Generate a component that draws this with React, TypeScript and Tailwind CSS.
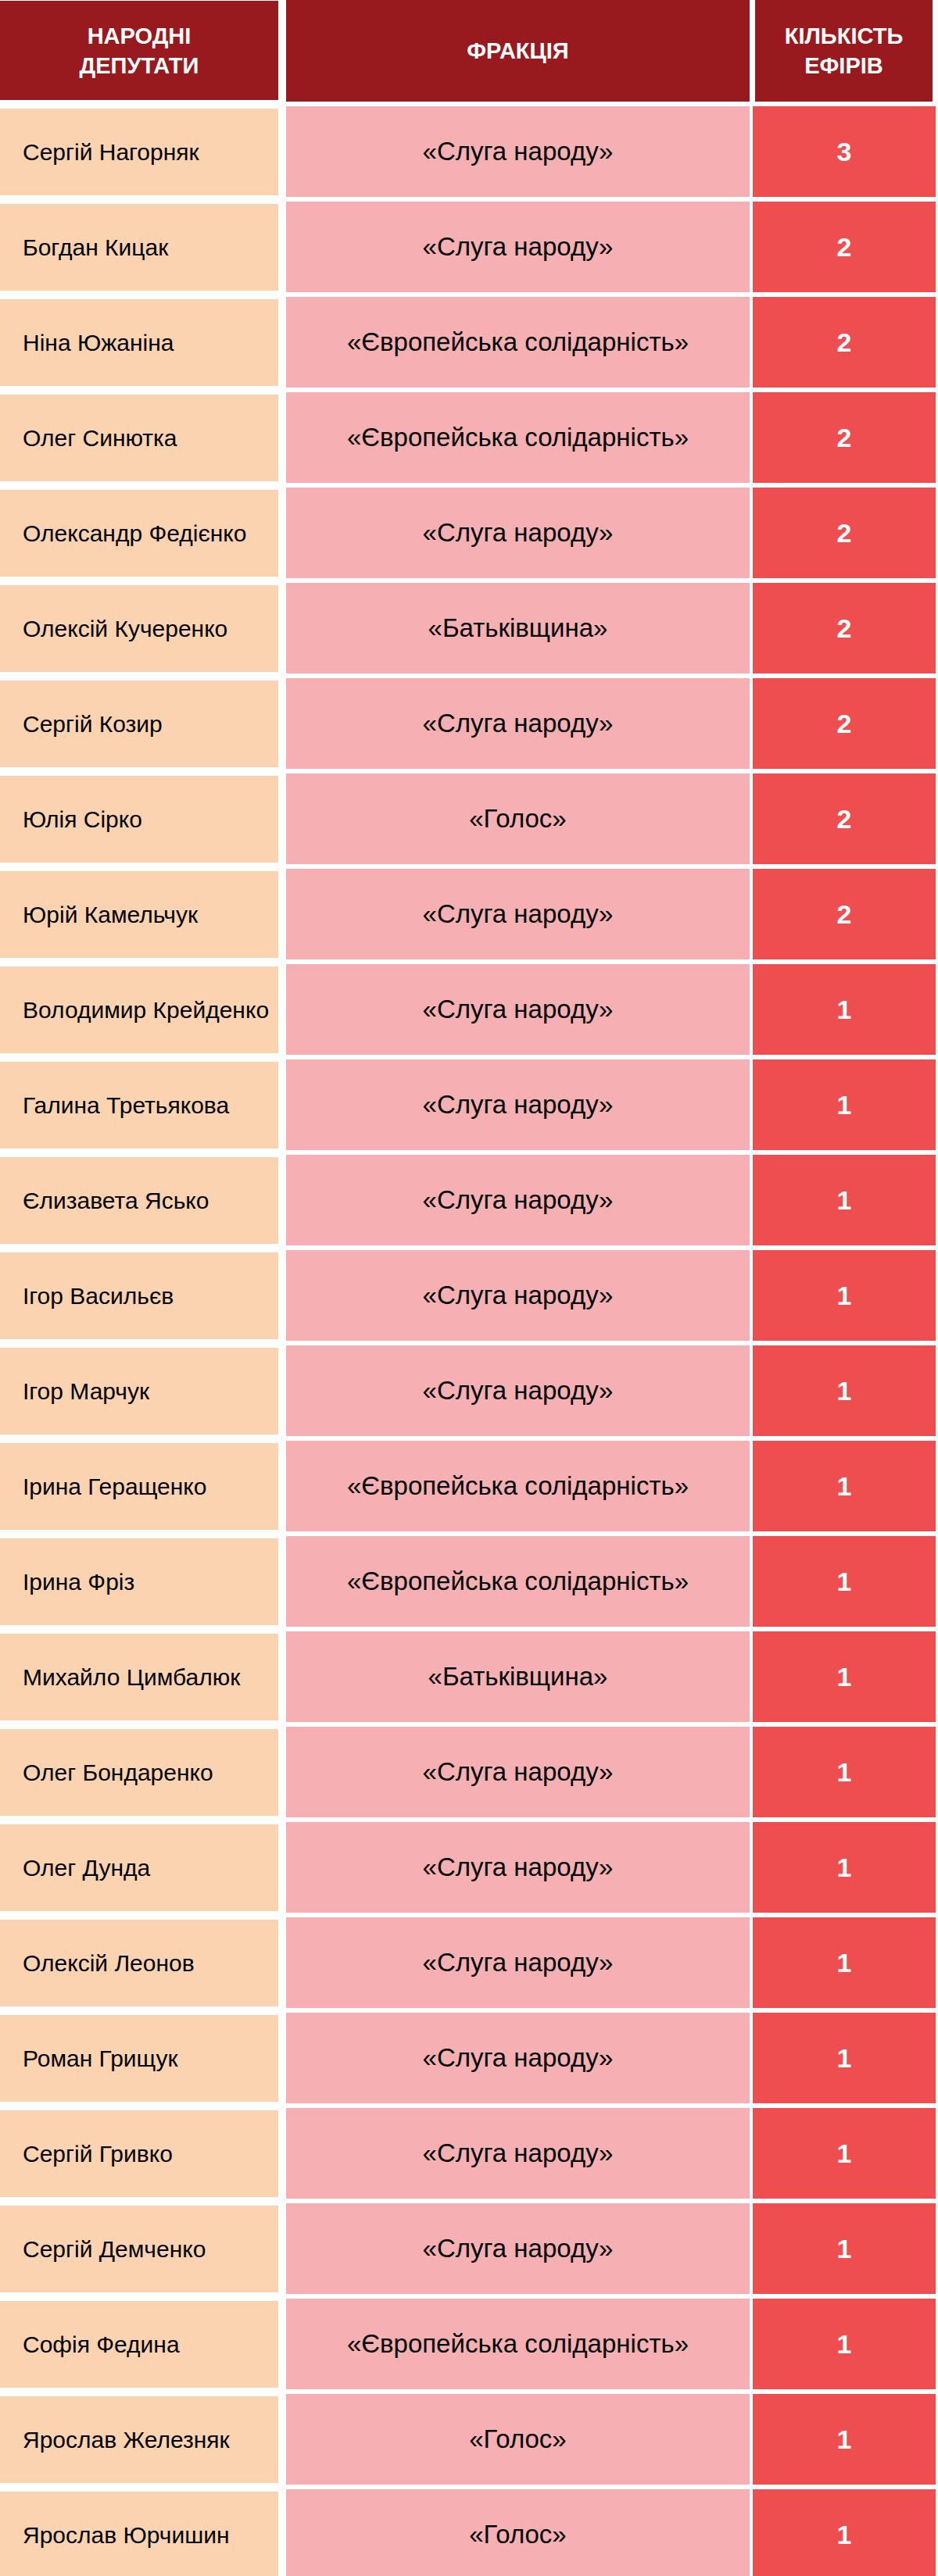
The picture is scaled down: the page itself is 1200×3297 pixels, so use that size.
const rows: [string, string, number][] = [
  ["Сергій Нагорняк", "«Слуга народу»", 3],
  ["Богдан Кицак", "«Слуга народу»", 2],
  ["Ніна Южаніна", "«Європейська солідарність»", 2],
  ["Олег Синютка", "«Європейська солідарність»", 2],
  ["Олександр Федієнко", "«Слуга народу»", 2],
  ["Олексій Кучеренко", "«Батьківщина»", 2],
  ["Сергій Козир", "«Слуга народу»", 2],
  ["Юлія Сірко", "«Голос»", 2],
  ["Юрій Камельчук", "«Слуга народу»", 2],
  ["Володимир Крейденко", "«Слуга народу»", 1],
  ["Галина Третьякова", "«Слуга народу»", 1],
  ["Єлизавета Ясько", "«Слуга народу»", 1],
  ["Ігор Васильєв", "«Слуга народу»", 1],
  ["Ігор Марчук", "«Слуга народу»", 1],
  ["Ірина Геращенко", "«Європейська солідарність»", 1],
  ["Ірина Фріз", "«Європейська солідарність»", 1],
  ["Михайло Цимбалюк", "«Батьківщина»", 1],
  ["Олег Бондаренко", "«Слуга народу»", 1],
  ["Олег Дунда", "«Слуга народу»", 1],
  ["Олексій Леонов", "«Слуга народу»", 1],
  ["Роман Грищук", "«Слуга народу»", 1],
  ["Сергій Гривко", "«Слуга народу»", 1],
  ["Сергій Демченко", "«Слуга народу»", 1],
  ["Софія Федина", "«Європейська солідарність»", 1],
  ["Ярослав Железняк", "«Голос»", 1],
  ["Ярослав Юрчишин", "«Голос»", 1],
];

const App = () => {
  return (
    <div className="w-[1200px] bg-white font-[family-name:Liberation_Sans,Arial,sans-serif] text-black">
      {/* Header */}
      <div className="flex items-start text-white font-bold text-[29px] leading-[38px] uppercase">
        <div className="w-[356px] h-[127px] mt-px bg-[#981a1f] flex items-center justify-center text-center">
          Народні
          <br />
          депутати
        </div>
        <div className="w-[593px] h-[130px] ml-[10px] bg-[#981a1f] flex items-center justify-center">
          Фракція
        </div>
        <div className="w-[227px] h-[130px] ml-[7px] bg-[#981a1f] flex items-center justify-center text-center">
          Кількість
          <br />
          ефірів
        </div>
      </div>

      {/* Rows */}
      <div className="flex flex-col gap-[6px] mt-[6px]">
        {rows.map(([name, party, count]) => (
          <div key={name} className="flex h-[116px]">
            <div className="w-[356px] h-[111px] mt-[3px] bg-[#fcd3b0] flex items-center pl-[29px] text-[30px]">
              {name}
            </div>
            <div className="w-[593px] ml-[10px] bg-[#f6b0b3] flex items-center justify-center text-[33px]">
              {party}
            </div>
            <div className="w-[234px] ml-[4px] bg-[#ef4e50] flex items-center justify-center text-white font-bold text-[34px]">
              {count}
            </div>
          </div>
        ))}
      </div>
    </div>
  );
};

export default App;
